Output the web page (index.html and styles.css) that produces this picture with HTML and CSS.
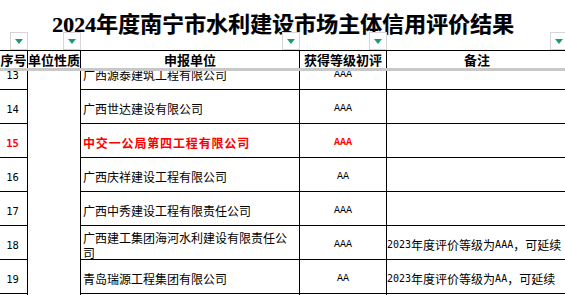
FILE: index.html
```html
<!DOCTYPE html>
<html lang="zh-CN">
<head>
<meta charset="utf-8">
<title>2024年度南宁市水利建设市场主体信用评价结果</title>
<link rel="stylesheet" href="styles.css">
</head>
<body>
<div class="sheet">
  <div class="title"><span class="tnum">2024</span>年度南宁市水利建设市场主体信用评价结果</div>
  <div class="filters cols">
    <div class="fcell"><span class="fbtn"><i></i></span></div>
    <div class="fcell"><span class="fbtn"><i></i></span></div>
    <div class="fcell"><span class="fbtn"><i></i></span></div>
    <div class="fcell"><span class="fbtn"><i></i></span></div>
    <div class="fcell"><span class="fbtn"><i></i></span></div>
  </div>
  <div class="hdr cols">
    <div class="hc">序号</div>
    <div class="hc">单位性质</div>
    <div class="hc">申报单位</div>
    <div class="hc">获得等级初评</div>
    <div class="hc">备注</div>
  </div>
  <div class="freeze"></div>
  <div class="viewport">
    <div class="rows cols">
      <div class="c merged"></div>

      <div class="c num">13</div>
      <div class="c name">广西源泰建筑工程有限公司</div>
      <div class="c grade">AAA</div>
      <div class="c note"></div>

      <div class="c num">14</div>
      <div class="c name">广西世达建设有限公司</div>
      <div class="c grade">AAA</div>
      <div class="c note"></div>

      <div class="c num hot">15</div>
      <div class="c name hot">中交一公局第四工程有限公司</div>
      <div class="c grade hot">AAA</div>
      <div class="c note"></div>

      <div class="c num">16</div>
      <div class="c name">广西庆祥建设工程有限公司</div>
      <div class="c grade">AA</div>
      <div class="c note"></div>

      <div class="c num">17</div>
      <div class="c name">广西中秀建设工程有限责任公司</div>
      <div class="c grade">AAA</div>
      <div class="c note"></div>

      <div class="c num">18</div>
      <div class="c name two">广西建工集团海河水利建设有限责任公<br>司</div>
      <div class="c grade">AAA</div>
      <div class="c note"><span class="n">2023</span>年度评价等级为<span class="n">AAA</span>，可延续</div>

      <div class="c num">19</div>
      <div class="c name">青岛瑞源工程集团有限公司</div>
      <div class="c grade">AA</div>
      <div class="c note"><span class="n">2023</span>年度评价等级为<span class="n">AA</span>，可延续</div>

      <div class="c num">20</div>
      <div class="c name"></div>
      <div class="c grade"></div>
      <div class="c note"></div>
    </div>
  </div>
</div>
</body>
</html>
```
FILE: styles.css
```css
html, body {
  margin: 0;
  padding: 0;
  background: #fff;
}
body {
  width: 565px;
  height: 295px;
  overflow: hidden;
  font-family: "Noto Sans CJK SC", "Noto Sans", sans-serif;
  color: #000;
}
.sheet {
  width: 568px;
}
.cols {
  display: grid;
  grid-template-columns: 28px 53px 219px 87px 181px;
}
.title {
  height: 32px;
  box-sizing: border-box;
  padding-top: 8px;
  line-height: 28px;
  font-size: 22px;
  font-weight: bold;
  text-align: center;
  width: 566px;
  white-space: nowrap;
  text-shadow: 0.4px 0 0 rgba(0, 0, 60, 0.5);
}
.tnum {
  font-family: "Liberation Serif", serif;
  font-weight: bold;
}
.filters {
  height: 18px;
}
.fcell {
  display: flex;
  justify-content: flex-end;
}
.fbtn {
  width: 18px;
  height: 18px;
  box-sizing: border-box;
  border: 1px solid #d6d6d6;
  background: #fff;
  display: flex;
  align-items: center;
  justify-content: center;
}
.fbtn i {
  display: block;
  width: 0;
  height: 0;
  border-left: 4px solid transparent;
  border-right: 4px solid transparent;
  border-top: 5px solid #1a9e68;
  margin-top: 1px;
}
.hdr {
  border-top: 1px solid #000;
  height: 17px;
}
.hc {
  border-right: 1px solid #000;
  box-sizing: border-box;
  font-size: 13px;
  font-weight: bold;
  line-height: 17px;
  text-align: center;
  white-space: nowrap;
  overflow: hidden;
}
.freeze {
  height: 3px;
  background: #c8c8c8;
}
.viewport {
  height: 224px;
  overflow: hidden;
}
.rows {
  margin-top: -15px;
  grid-template-rows: repeat(8, 34px);
}
.c {
  box-sizing: border-box;
  border-right: 1px solid #000;
  border-bottom: 1px solid #000;
  display: flex;
  align-items: center;
  padding-top: 4px;
  font-size: 12px;
  white-space: nowrap;
  overflow: hidden;
}
.merged {
  grid-column: 2;
  grid-row: 1 / -1;
  border-bottom: none;
}
.num {
  justify-content: center;
  font-family: "DejaVu Sans Mono", monospace;
  font-size: 10.5px;
  padding-right: 2px;
}
.name {
  padding-left: 2px;
}
.name.hot {
  letter-spacing: 0.85px;
}
.two {
  line-height: 15px;
  white-space: normal;
}
.grade {
  justify-content: center;
  font-family: "Liberation Mono", monospace;
  font-size: 10px;
}
.note {
  padding-left: 0;
}
.n {
  font-family: "DejaVu Sans Mono", monospace;
  font-size: 10px;
}
.hot {
  color: #ff0000;
  font-weight: bold;
}
```
